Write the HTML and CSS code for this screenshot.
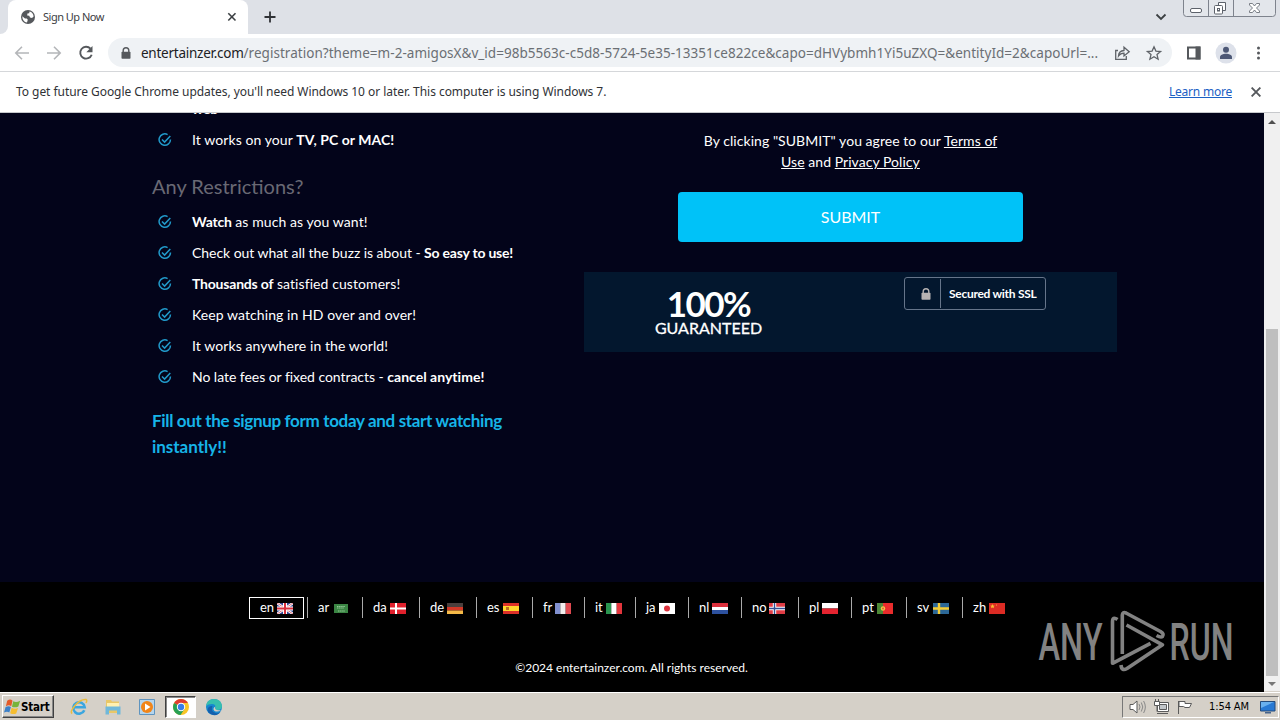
FILE: index.html
```html
<!DOCTYPE html>
<html lang="en">
<head>
<meta charset="utf-8">
<title>Sign Up Now</title>
<link rel="stylesheet" href="styles.css">
</head>
<body>
<svg class="defs" width="0" height="0"><defs>
<symbol id="check" viewBox="0 0 14 14"><path d="M9.600 1.600A5.700 5.700 0 1 0 12.500 6.500M4 6.400l2.600 2.700L12.300 3" fill="none" stroke="#2199c9" stroke-width="1.500"/></symbol>
<symbol id="lock" viewBox="0 0 10 12"><path d="M2.200 6V3.600a2.800 2.800 0 0 1 5.600 0V6" fill="none" stroke="currentColor" stroke-width="1.400"/><rect x=".5" y="4.700" width="9" height="7" rx=".8" fill="currentColor"/></symbol>
</defs></svg>
<header class="tabs">
  <div class="tab-edge"></div>
  <div class="tab">
    <svg width="14" height="14" viewBox="0 0 14 14"><circle cx="7" cy="7" r="7" fill="#55585c"/><path d="M1.300 6.200 4 8.400l1.800.2 1 1.200-.8 2.800C3 12 1.300 9.800 1.300 6.200zM8.500 1.400C10.800 1.800 12.600 4 12.600 6.500L11 8l-2-.6-.8-1.600-2-.4.2-1.800 1.800-.4z" fill="#fff"/></svg>
    <span class="tab-title">Sign Up Now</span>
    <svg class="tab-close" width="10" height="10" viewBox="0 0 10 10"><path d="M1.300 1.300l7.200 7.200M8.500 1.300L1.300 8.500" stroke="#3c4043" stroke-width="1.600"/></svg>
  </div>
  <svg class="plus" width="12" height="12" viewBox="0 0 12 12"><path d="M6 .5v11M.5 6h11" stroke="#303236" stroke-width="1.800"/></svg>
  <svg class="chev" width="12" height="8" viewBox="0 0 12 8"><path d="M1.500 1.500L6 6l4.500-4.500" fill="none" stroke="#3c4043" stroke-width="1.800"/></svg>
  <svg class="winbtns" width="94" height="18" viewBox="0 0 94 18"><path d="M.5-1V13.500q0 3 3 3H89.500q3 0 3-3V-1M25.500 0V16M50.500 0V16" fill="#e3e6eb" stroke="#7e838d"/><rect x="7.500" y="8.500" width="11" height="4" rx="1.500" fill="#fff" stroke="#5d626b"/><path d="M35.500 2.500h7v8h-7z" fill="#fff" stroke="#5d626b"/><rect x="31.500" y="5.500" width="8" height="8.500" rx="1" fill="#fff" stroke="#5d626b"/><rect x="34.500" y="8.500" width="2" height="2.500" fill="none" stroke="#5d626b"/><path d="M66.500 3.500h3l2 2.500 2-2.500h3v1.500l-3 3 3 3v1.500h-3l-2-2.500-2 2.500h-3V11l3-3-3-3z" fill="#fff" stroke="#6b7078" stroke-width=".9"/></svg>
</header>
<nav class="toolbar">
  <svg class="nav-ico" width="86" height="16" viewBox="0 0 86 16"><g fill="none" stroke="#b4b6b9" stroke-width="1.600"><path d="M15 8H2M8 1.800L1.800 8 8 14.200M33 8h13M40 1.800L46.200 8 40 14.200"/></g><path d="M76.500 3.700A5.900 5.900 0 1 0 77.700 9.700" fill="none" stroke="#55585c" stroke-width="1.900"/><path d="M78.500 1v6.200h-6.200z" fill="#55585c"/></svg>
  <div class="omnibox">
    <svg class="lock" width="10" height="12"><use href="#lock"/></svg>
    <span class="url"><b>entertainzer.com</b>/registration?theme=m-2-amigosX&amp;v_id=98b5563c-c5d8-5724-5e35-13351ce822ce&amp;capo=dHVybmh1Yi5uZXQ=&amp;entityId=2&amp;capoUrl=...</span>
    <svg class="box-ico" width="50" height="16" viewBox="0 0 50 16"><g fill="none" stroke="#5f6368" stroke-width="1.300"><path d="M4 5.500H1.700V14.300H12.300V11"/><path d="M4.500 11C4.700 7.500 6.500 5.700 10 5.500V2.200L15.200 6.800 10 11V8.200C7.500 8.200 5.800 9.100 4.500 11z"/><path d="M40 1.800l1.900 4.300 4.700.4-3.600 3.100 1.100 4.600L40 11.800l-4.100 2.400L37 9.600l-3.600-3.100 4.700-.4z"/></g></svg>
  </div>
  <svg class="tool-ico" width="78" height="22" viewBox="0 0 78 22"><path d="M2 5.500h11.500v11H2z" fill="#fff" stroke="#55585c" stroke-width="2"/><path d="M9.500 4.500h5v13h-5z" fill="#55585c"/><circle cx="40" cy="11" r="10.500" fill="#dde1ea"/><circle cx="40" cy="7.700" r="3" fill="#4d5876"/><path d="M34 17v-1.800c0-2.200 3-3.400 6-3.400s6 1.200 6 3.400V17z" fill="#4d5876"/><g fill="#55585c"><circle cx="72.500" cy="6" r="1.500"/><circle cx="72.500" cy="11" r="1.500"/><circle cx="72.500" cy="16" r="1.500"/></g></svg>
</nav>
<div class="infobar">
  <span class="notice">To get future Google Chrome updates, you'll need Windows 10 or later. This computer is using Windows 7.</span>
  <a class="learn">Learn more</a>
  <svg width="10" height="10" viewBox="0 0 10 10"><path d="M.6.600l8.800 8.800M9.400.6L.6 9.400" stroke="#55585c" stroke-width="1.900"/></svg>
</div>
<div class="viewport">
  <div class="page">
    <main class="main">
      <section class="left">
        <ul class="list">
          <li class="cont"><b>web</b></li>
          <li><svg class="tick"><use href="#check"/></svg><span class="wide">It works on your <b>TV, PC or MAC!</b></span></li>
        </ul>
        <h3>Any Restrictions?</h3>
        <ul class="list">
          <li><svg class="tick"><use href="#check"/></svg><span><b>Watch</b> as much as you want!</span></li>
          <li><svg class="tick"><use href="#check"/></svg><span class="tight">Check out what all the buzz is about - <b>So easy to use!</b></span></li>
          <li><svg class="tick"><use href="#check"/></svg><span><b>Thousands of</b> satisfied customers!</span></li>
          <li><svg class="tick"><use href="#check"/></svg><span>Keep watching in HD over and over!</span></li>
          <li><svg class="tick"><use href="#check"/></svg><span>It works anywhere in the world!</span></li>
          <li><svg class="tick"><use href="#check"/></svg><span class="fees">No late fees or fixed contracts - <b>cancel anytime!</b></span></li>
        </ul>
        <p class="cta">Fill out the signup form today and start watching<br><span>instantly!!</span></p>
      </section>
      <section class="right">
        <p class="agree">By clicking "SUBMIT" you agree to our <u>Terms of</u><br><u>Use</u> and <u>Privacy Policy</u></p>
        <button class="submit">SUBMIT</button>
        <div class="trust">
          <div class="guarantee"><strong>100%</strong><span>GUARANTEED</span></div>
          <div class="ssl"><div class="ssl-lock"><svg width="10" height="12"><use href="#lock"/></svg></div><span>Secured with SSL</span></div>
        </div>
      </section>
    </main>
    <footer class="footer">
      <div class="langs">
        <div class="lang current"><span>en</span><svg viewBox="0 0 16 11"><path fill="#31458f" d="M0 0h16v11H0z"/><path d="M0 0l16 11M16 0L0 11" stroke="#fff" stroke-width="2.400"/><path d="M0 0l16 11M16 0L0 11" stroke="#d34856" stroke-width=".8"/><path d="M8 0v11M0 5.500h16" stroke="#fff" stroke-width="4"/><path d="M8 0v11M0 5.500h16" stroke="#d8303e" stroke-width="2"/></svg></div>
        <div class="lang"><span>ar</span><svg viewBox="0 0 16 11"><path fill="#3b8644" d="M1 1h14v9H1z"/><path d="M4 3.500h8M4 5h7M5 8h7" stroke="#9fcfa2" stroke-width=".9" stroke-dasharray="1.500 .6"/></svg></div>
        <div class="lang"><span>da</span><svg viewBox="0 0 16 11"><path fill="#e0202c" d="M0 0h16v11H0z"/><path d="M6 0v11M0 5.500h16" stroke="#fff" stroke-width="2"/></svg></div>
        <div class="lang"><span>de</span><svg viewBox="0 0 16 11"><path fill="#4b3f3d" d="M0 0h16v4H0z"/><path fill="#d23726" d="M0 4h16v3.500H0z"/><path fill="#f5ba48" d="M0 7.500h16V11H0z"/></svg></div>
        <div class="lang"><span>es</span><svg viewBox="0 0 16 11"><path fill="#dc3028" d="M0 0h16v11H0z"/><path fill="#ffd52c" d="M0 3h16v5H0z"/><path fill="#bd6b22" d="M3 4h3v3H3z"/></svg></div>
        <div class="lang"><span>fr</span><svg viewBox="0 0 16 11"><path fill="#8190cf" d="M0 0h5.300v11H0z"/><path fill="#f2eeee" d="M5.300 0h5.400v11H5.300z"/><path fill="#e04950" d="M10.700 0H16v11h-5.300z"/></svg></div>
        <div class="lang"><span>it</span><svg viewBox="0 0 16 11"><path fill="#29944e" d="M0 0h5.300v11H0z"/><path fill="#fff" d="M5.300 0h5.400v11H5.300z"/><path fill="#e3353c" d="M10.700 0H16v11h-5.300z"/></svg></div>
        <div class="lang"><span>ja</span><svg viewBox="0 0 16 11"><path fill="#fff" d="M0 0h16v11H0z"/><circle cx="8" cy="5.500" r="3" fill="#dc323d"/></svg></div>
        <div class="lang"><span>nl</span><svg viewBox="0 0 16 11"><path fill="#dc303c" d="M0 0h16v4H0z"/><path fill="#fff" d="M0 4h16v3H0z"/><path fill="#2d519f" d="M0 7h16v4H0z"/></svg></div>
        <div class="lang"><span>no</span><svg viewBox="0 0 16 11"><path fill="#df3c45" d="M0 0h16v11H0z"/><path d="M5.500 0v11M0 5.500h16" stroke="#fff" stroke-width="3.400"/><path d="M5.500 0v11M0 5.500h16" stroke="#344d94" stroke-width="1.400"/></svg></div>
        <div class="lang"><span>pl</span><svg viewBox="0 0 16 11"><path fill="#fff" d="M0 0h16v5.500H0z"/><path fill="#e52430" d="M0 5.500h16V11H0z"/></svg></div>
        <div class="lang"><span>pt</span><svg viewBox="0 0 16 11"><path fill="#4b8735" d="M0 0h6v11H0z"/><path fill="#e92c2c" d="M6 0h10v11H6z"/><circle cx="6" cy="5.500" r="2.200" fill="#edc947"/><circle cx="6" cy="5.500" r="1" fill="#df5f35"/></svg></div>
        <div class="lang"><span>sv</span><svg viewBox="0 0 16 11"><path fill="#2c6897" d="M0 0h16v11H0z"/><path d="M6 0v11M0 5.500h16" stroke="#f5cd34" stroke-width="2.400"/></svg></div>
        <div class="lang"><span>zh</span><svg viewBox="0 0 16 11"><path fill="#dc2b24" d="M0 0h16v11H0z"/><path fill="#f8bd32" d="M3.500 1l.7 1.500 1.600.2-1.200 1 .3 1.600-1.400-.8-1.400.8.300-1.600-1.200-1 1.600-.2z"/><circle cx="7.500" cy="2" r=".6" fill="#f8bd32"/></svg></div>
      </div>
      <p class="copyright">©2024 entertainzer.com. All rights reserved.</p>
      <svg class="watermark" width="204" height="68" viewBox="0 0 204 68"><g fill="#828282" font-family="Roboto,sans-serif" font-size="52" font-weight="500"><text x="4.500" y="51.500" textLength="64" lengthAdjust="spacingAndGlyphs">ANY</text><text x="135.500" y="51.500" textLength="64" lengthAdjust="spacingAndGlyphs">RUN</text></g><g fill="none" stroke="#828282" stroke-width="3.600" stroke-linejoin="round"><path d="M83.500 11.500Q78.500 8 78.500 14V55.300L116.500 35.300"/><path d="M88.300 46V7Q88.500 3.500 92 5L126.500 23.500Q130.500 26 128.500 28.500 127 30 122.500 27.500"/><path d="M92.500 17L128.500 36.800 93 60.500Q87.500 63.500 87 57"/></g></svg>
    </footer>
  </div>
  <aside class="scroll"><i class="up"></i><div class="thumb"></div><i class="down"></i></aside>
</div>
<div class="taskbar">
  <div class="start"><svg width="17" height="16" viewBox="0 0 16 14"><path d="M3 1q3-2 5 0L6.800 6.200q-2-1.500-5 0z" fill="#e45a28"/><path d="M8.700 1.700q3 1.500 6.500-.7l-1.700 5.500q-3 1.500-6 .2z" fill="#77b43a"/><path d="M1.500 7q3-1.500 5 0L5 12.200q-2-1.500-5 0z" fill="#3c80c8"/><path d="M7.200 7.600q3 1.700 6 .3L11.500 13Q9 14.500 5.800 12.800z" fill="#f5bd30"/></svg><b>Start</b></div>
  <div class="apps">
    <svg width="18" height="18" viewBox="0 0 18 18"><path d="M14.300 12.200A5.700 5.700 0 1 1 14.700 9.300H4" fill="none" stroke="#3ba6df" stroke-width="2.600"/><path d="M2.200 15.500Q-.5 14 5 7.500T16 1.500q1.500.8 0 3.500" fill="none" stroke="#eabc3e" stroke-width="1.500"/></svg>
    <svg width="18" height="18" viewBox="0 0 18 18"><path d="M2 2h5l1 1.500h7V15H2z" fill="#e9c767"/><path d="M3 5h12v4H3z" fill="#fff0b1"/><path d="M1.500 8.500h15V16.500h-3.500v-4H5v4H1.500z" fill="#70b8da"/></svg>
    <svg width="18" height="18" viewBox="0 0 18 18"><path d="M1.500 1.500h15v15h-15z" fill="#b5d5ed" stroke="#5f94bf"/><circle cx="9" cy="9" r="6" fill="#f18519"/><path d="M7 5.500L12.500 9 7 12.500z" fill="#fff"/></svg>
    <div class="active"><svg width="18" height="18" viewBox="0 0 18 18"><circle cx="9" cy="9" r="8" fill="#f9c526"/><path d="M9 9L2.100 5A8 8 0 0 1 15.900 5H9z" fill="#df3d31"/><path d="M2.100 5A8 8 0 0 0 8.500 17L12.500 11 9 9z" fill="#27a054"/><circle cx="9" cy="9" r="4.200" fill="#fff"/><circle cx="9" cy="9" r="3.200" fill="#397de8"/></svg></div>
    <svg width="18" height="18" viewBox="0 0 18 18"><circle cx="9" cy="9" r="8" fill="#1688cf"/><path d="M1.200 8Q2 1 9 1t8 7q0 4-5 4-2.500 0-1.500-2 .5-4-3.500-4-4 0-5.800 2z" fill="#37bfae"/><path d="M7.500 8Q5 13 10.500 15q3 .8 5-1.200-2.500 4-7.500 3.200Q1 15 3 10q1.500-2.500 4.500-2z" fill="#1560ad"/><path d="M10.400 8.500q-1.700 4.500 5.600 3.500-3 2.500-6.500 1-2.500-2.300.9-4.500z" fill="#d7ccc3"/></svg>
  </div>
  <div class="tray">
    <svg width="66" height="18" viewBox="0 0 66 18"><g fill="#fff" stroke="#5b5b5b"><path d="M2 6.500h3L9 3v12l-4-3.500H2z"/><path d="M11 6q2 3 0 6M13.300 4.500q3 4.500 0 9M15.600 3q3.500 6 0 12" fill="none" stroke="#888"/><path d="M29.500 4.500h11v9h-11z"/><path d="M31.500 6.500h7v5h-7z" fill="#c2c6c9"/><path d="M29 15.500h11M26.500 3.500h5v4h-5zM27.500 1v2.500M30.500 1v2.500M29 7.500v6"/><path d="M50.500 16V3M51 3.500h6v2h6.500l-2 4H57l-1.500-1H51z"/></g></svg>
    <span>1:54 AM</span>
    <svg width="16" height="14" viewBox="0 0 16 14"><path d="M.5 1.500h14.500v9.500H.5z" fill="#2879d3" stroke="#244b7b"/><path d="M1 2h13L1 8z" fill="#69b0ee"/><path d="M5 12h6v1.500H5z" fill="#46648c"/></svg>
  </div>
</div>
</body>
</html>
```
FILE: styles.css
```css
*{box-sizing:border-box}
body{margin:0;width:1280px;height:720px;overflow:hidden;font-family:"DejaVu Sans Condensed","DejaVu Sans",sans-serif;display:flex;flex-direction:column}
svg{display:block;flex:none}
.defs{position:absolute}
ul,p,h3{margin:0;padding:0;list-style:none}
.tabs{height:34px;background:#dee1e7;display:flex;align-items:center;flex:none}
.tab-edge{width:8px;height:34px;background:#fff;flex:none}
.tab-edge::before{content:"";display:block;width:8px;height:34px;background:#dee1e7;border-bottom-right-radius:8px}
.tab{width:240px;height:34px;background:#fff;border-radius:8px 8px 0 0;display:flex;align-items:center;padding-left:13px}
.tab-title{font-family:"Noto Sans",sans-serif;font-size:11px;color:#3c4043;margin:-2px 0 0 8px;letter-spacing:-.5px;white-space:nowrap}
.tab-close{margin-left:auto;margin-right:11px}
.plus{margin-left:16px}
.chev{margin-left:auto;margin-right:16px}
.winbtns{align-self:flex-start;margin-right:3px}
.toolbar{height:38px;flex:none;background:#fff;border-bottom:1px solid #d5d7da;display:flex;align-items:center;padding-left:14px}
.nav-ico{width:86px}
.omnibox{width:1064px;height:29px;margin-left:8px;border-radius:15px;background:#eff2f5;display:flex;align-items:center;padding-left:13px}
.lock{color:#55585c}
.url{margin-left:10px;font:13.5px "Noto Sans",sans-serif;color:#6b6f74;width:960px;white-space:nowrap;letter-spacing:.03px}
.url b{font-weight:400;color:#202124;letter-spacing:-.25px}
.box-ico{margin-left:13px}
.tool-ico{margin-left:14px}
.infobar{height:41px;flex:none;background:#fff;border-bottom:1px solid #c7c9cc;display:flex;align-items:center;padding:0 19px 0 16px;font:12px "Noto Sans",sans-serif;color:#303236}
.notice{white-space:nowrap;letter-spacing:-.05px;margin-top:-2px}
.learn{color:#1b60c4;text-decoration:underline;margin:-2px 19px 0 auto;letter-spacing:-.22px}
.viewport{height:579px;flex:none;display:flex}
.page{width:1264px;height:579px;overflow:hidden;font-family:Lato,sans-serif;color:#fff}
.main{height:469px;background:#03041a;display:flex;padding-left:152px}
.left{width:432px;margin-top:-20px}
.list li{height:31px;display:flex;align-items:center;padding-left:6px;font-size:14px;letter-spacing:.08px;white-space:nowrap}
.list .cont{padding-left:40px}
.tick{width:14px;height:14px;margin-right:20px}
.left b{font-weight:700;letter-spacing:-.2px}
.left .wide b{letter-spacing:.05px}
.left .tight{letter-spacing:-.05px}
.left .tight b{letter-spacing:-.22px}
.left .fees{letter-spacing:-.04px}
.left .fees b{letter-spacing:.02px}
h3{font-size:20px;font-weight:400;color:#696974;line-height:24px;padding:19px 0 8px;letter-spacing:0}
.cta{font-size:17px;font-weight:700;color:#16b4e8;line-height:26px;padding-top:16px;letter-spacing:-.33px;white-space:nowrap}
.cta span{letter-spacing:-.02px}
.right{width:533px;display:flex;flex-direction:column;align-items:center;padding-top:17px}
.agree{text-align:center;font-size:14px;line-height:21px;letter-spacing:.05px}
.submit{width:345px;height:50px;margin-top:20px;padding-bottom:3px;flex:none;background:#00c2f8;color:#fff;border:0;border-radius:4px;font:16px Lato,sans-serif}
.trust{width:533px;height:80px;flex:none;margin-top:30px;background:#03172e;display:flex;padding-left:71px}
.guarantee{width:107px;display:flex;flex-direction:column;align-items:center;padding-top:14px}
.guarantee strong{font-size:35px;line-height:34px;letter-spacing:-1.5px}
.guarantee span{font-size:16px;line-height:16px;letter-spacing:0;-webkit-text-stroke:.3px #fff}
.ssl{width:142px;height:33px;margin:5px 0 0 142px;border:1px solid #66758a;border-radius:3px;display:flex;align-items:center;font-size:12px;font-weight:700;letter-spacing:-.28px;white-space:nowrap}
.ssl-lock{width:36px;height:29px;border-right:1px solid #66758a;margin-right:8px;display:flex;align-items:center;padding-left:16px;color:#b7b3b3}
.footer{height:110px;background:#000;padding-top:15px;position:relative}
.langs{display:grid;grid-template-columns:58px 55px 57px 57px 56px 52px 51px 53px 53px 57px 53px 55px 56px 56px;margin-left:249px}
.lang{height:21px;border-left:1px solid #aaa;display:flex;align-items:center;justify-content:space-between;padding:0 13px 0 10px;font-size:13px;line-height:21px}
.lang span{margin-top:-1px}
.lang svg{width:16px;height:11px;margin-top:1px}
.current{width:55px;height:22px;border:1px solid #fff;padding-right:10px}
.current svg{margin-top:0}
.copyright{width:1263px;text-align:center;font-size:12px;line-height:16px;margin-top:41px}
.watermark{position:absolute;left:1034px;top:26px}
.scroll{width:16px;background:#f0f0f0;display:flex;flex-direction:column;align-items:center;padding:7px 0 6px}
.scroll i{border:4px solid transparent;height:0;width:0}
.up{border-bottom-color:#505050!important;border-top:0!important}
.down{border-top-color:#777!important;border-bottom:0!important;margin-top:auto}
.thumb{width:12px;height:347px;background:#bfbfbf;margin-top:205px}
.taskbar{height:28px;flex:none;background:#d5d0c8;border-top:1px solid #fff;box-shadow:0 -1px #d5d0c8;display:flex;align-items:center}
.start{width:52px;height:23px;margin-left:2px;border:1px solid;border-color:#fff #404040 #404040 #fff;box-shadow:inset -1px -1px #888;display:flex;align-items:center;padding-left:1px;font-size:11.500px;letter-spacing:-.2px}
.apps{display:flex;align-items:center;margin-left:16px}
.apps>svg{margin-right:16px}
.apps>svg:nth-child(3){margin-right:9px}
.active{width:31px;height:22px;background:#fff;border:1px solid;border-color:#404040 #fff #fff #404040;box-shadow:inset 1px 1px #888;display:flex;align-items:center;justify-content:center;margin-right:9px}
.tray{width:157px;height:22px;margin-left:auto;margin-right:1px;border:1px solid;border-color:#777 #fff #fff #777;display:flex;align-items:center;font-size:11px;padding-left:5px;white-space:nowrap}
.tray span{margin-left:15px;width:42px;letter-spacing:-.1px}
.tray>svg:last-child{margin-left:9px}
```
